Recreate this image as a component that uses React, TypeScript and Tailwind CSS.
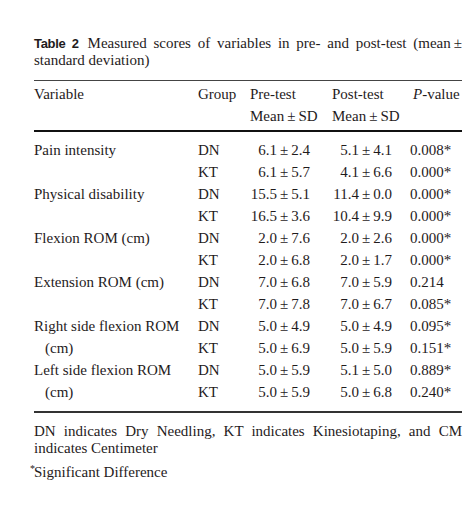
const rows = [
  {
    label: ['Pain intensity'],
    data: [
      ['DN', '6.1', '2.4', '5.1', '4.1', '0.008*'],
      ['KT', '6.1', '5.7', '4.1', '6.6', '0.000*'],
    ],
  },
  {
    label: ['Physical disability'],
    data: [
      ['DN', '15.5', '5.1', '11.4', '0.0', '0.000*'],
      ['KT', '16.5', '3.6', '10.4', '9.9', '0.000*'],
    ],
  },
  {
    label: ['Flexion ROM (cm)'],
    data: [
      ['DN', '2.0', '7.6', '2.0', '2.6', '0.000*'],
      ['KT', '2.0', '6.8', '2.0', '1.7', '0.000*'],
    ],
  },
  {
    label: ['Extension ROM (cm)'],
    data: [
      ['DN', '7.0', '6.8', '7.0', '5.9', '0.214'],
      ['KT', '7.0', '7.8', '7.0', '6.7', '0.085*'],
    ],
  },
  {
    label: ['Right side flexion ROM', '(cm)'],
    data: [
      ['DN', '5.0', '4.9', '5.0', '4.9', '0.095*'],
      ['KT', '5.0', '6.9', '5.0', '5.9', '0.151*'],
    ],
  },
  {
    label: ['Left side flexion ROM', '(cm)'],
    data: [
      ['DN', '5.0', '5.9', '5.1', '5.0', '0.889*'],
      ['KT', '5.0', '5.9', '5.0', '6.8', '0.240*'],
    ],
  },
];

const pm = (a: string, b: string) => `${a}\u2009±\u2009${b}`;

const App = () => {
  return (
    <div className="w-[474px] h-[510px] bg-white text-[#1f1b1c] font-['Liberation_Serif',serif] text-[15px] pl-[34px] pr-[12px] pt-[35px]">
      {/* Caption */}
      <p className="leading-[16px] text-justify">
        <span className="font-['Liberation_Sans',sans-serif] font-bold text-[13px] tracking-[-0.3px] mr-[2px]">
          Table 2
        </span>{' '}
        Measured scores of variables in pre- and post-test{' '}
        <span className="whitespace-nowrap">(mean{'\u2009'}±</span> standard deviation)
      </p>

      <div className="mt-[12px] h-px bg-[#444]" />

      {/* Header */}
      <div className="grid grid-cols-[164px_52px_82px_78px_52px] leading-[22px] pt-[2px]">
        <div>Variable</div>
        <div>Group</div>
        <div>
          Pre-test
          <br />
          Mean{'\u2009'}±{'\u2009'}SD
        </div>
        <div>
          Post-test
          <br />
          Mean{'\u2009'}±{'\u2009'}SD
        </div>
        <div className="pl-[3px] whitespace-nowrap">
          <span className="italic">P</span>-value
        </div>
      </div>

      <div className="mt-[3px] h-[2px] bg-[#111]" />

      {/* Body */}
      <div className="pt-[7px] leading-[22px]">
        {rows.map((r) => (
          <div key={r.label[0]} className="grid grid-cols-[164px_52px_82px_78px_52px] grid-rows-[22px_22px]">
            <div className="row-span-2 col-start-1 row-start-1">
              <div>{r.label[0]}</div>
              {r.label[1] && <div className="pl-[11px]">{r.label[1]}</div>}
            </div>
            {r.data.map((d, i) => (
              <div key={d[0]} className="contents">
                <div className={`col-start-2 ${i === 0 ? 'row-start-1' : 'row-start-2'}`}>{d[0]}</div>
                <div className={`col-start-3 text-right pr-[22px] ${i === 0 ? 'row-start-1' : 'row-start-2'}`}>
                  {pm(d[1], d[2])}
                </div>
                <div className={`col-start-4 text-right pr-[18px] ${i === 0 ? 'row-start-1' : 'row-start-2'}`}>
                  {pm(d[3], d[4])}
                </div>
                <div className={`col-start-5 ${i === 0 ? 'row-start-1' : 'row-start-2'}`}>{d[5]}</div>
              </div>
            ))}
          </div>
        ))}
      </div>

      <div className="mt-[8px] h-[1.5px] bg-[#333]" />

      {/* Footnotes */}
      <p className="mt-[10px] leading-[17px] text-justify">
        DN indicates Dry Needling, KT indicates Kinesiotaping, and CM indicates Centimeter
      </p>
      <p className="mt-[7px] leading-[17px]">
        <span className="inline-block w-[4px] -ml-[4px] align-top text-[10px] leading-[10px]">*</span>
        Significant Difference
      </p>
    </div>
  );
};

export default App;
